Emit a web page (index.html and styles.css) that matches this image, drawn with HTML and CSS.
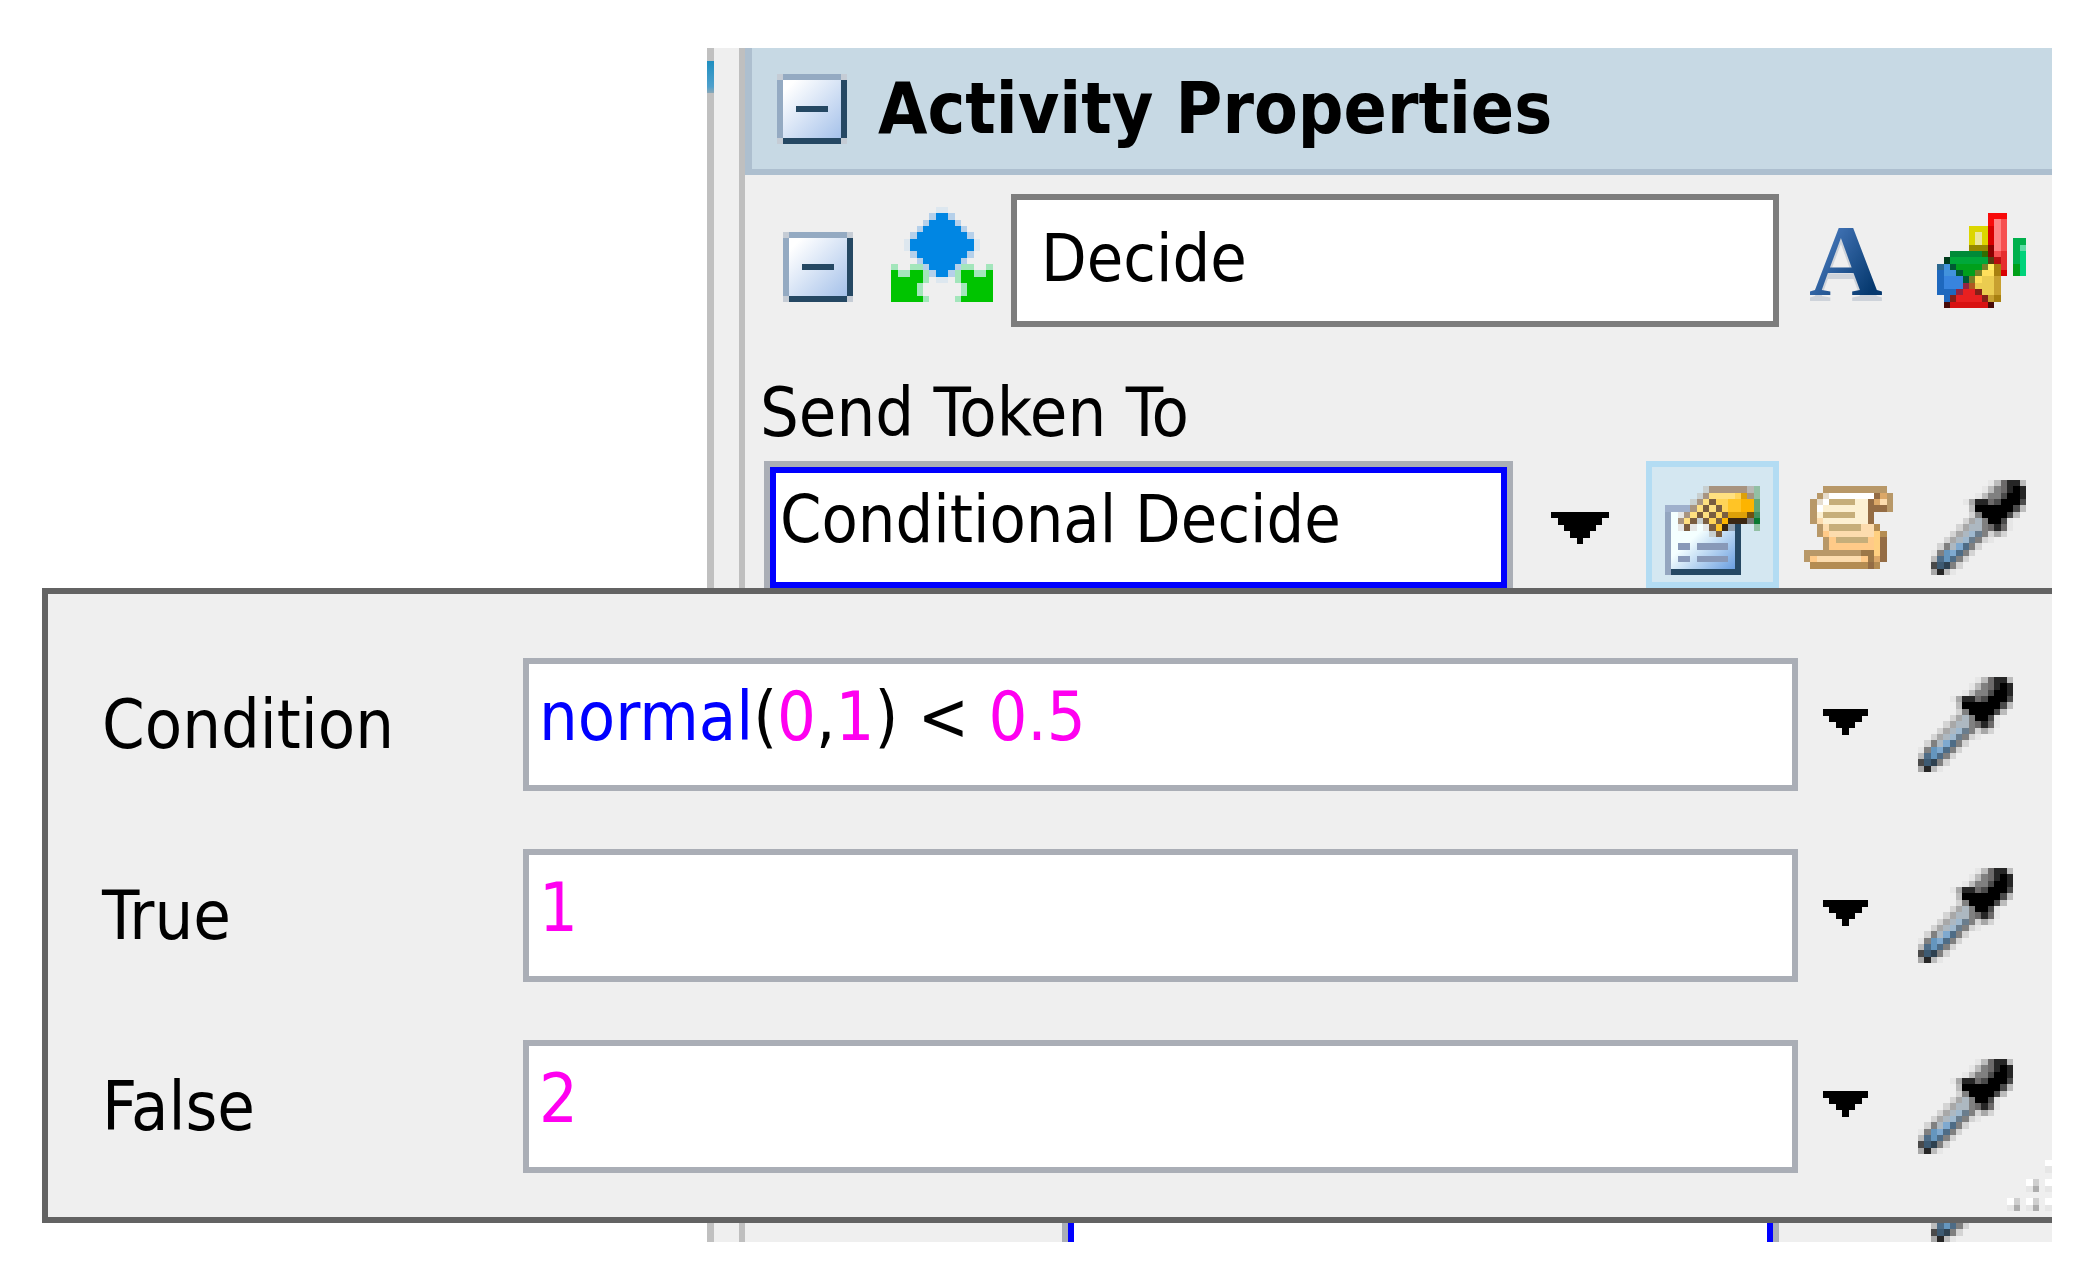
FILE: index.html
```
<!DOCTYPE html>
<html lang="en">
<head>
    <meta charset="UTF-8">
    <meta name="viewport" content="width=device-width, initial-scale=1.0">
    <title>Activity Properties</title>
    <link rel="stylesheet" href="styles.css">
</head>
<body>
    <!-- Shared icons -->
    <svg class="icon-defs" aria-hidden="true">
        <linearGradient id="boxFill" x1="0" y1="0" x2="1" y2="1">
            <stop offset="0.1" stop-color="#ffffff"/>
            <stop offset="1" stop-color="#a6c2ea"/>
        </linearGradient>
        <linearGradient id="paperFill" x1="0" y1="0" x2="1" y2="1">
            <stop offset="0.4" stop-color="#f4ffff"/>
            <stop offset="1" stop-color="#6b9fe0"/>
        </linearGradient>
        <linearGradient id="letterFill" x1="0" y1="0" x2="1" y2="1">
            <stop offset="0.2" stop-color="#4a7cc0"/>
            <stop offset="0.8" stop-color="#06396f"/>
        </linearGradient>
        <symbol id="collapse" viewBox="0 0 11 11">
            <path fill="#c5ccd5" d="M0 0h11v11h-11z"/>
            <path fill="#94aac2" d="M1 0h9v1h-9zM0 1h1v9h-1z"/>
            <path fill="#254863" d="M10 1h1v9h-1zM1 10h9v1h-9z"/>
            <path fill="url(#boxFill)" d="M1 1h9v9h-9z"/>
            <path fill="#254863" d="M3 5h5v1h-5z"/>
        </symbol>
        <symbol id="arrow" viewBox="0 0 7 4">
            <path d="M0 0h7v1h-1v1h-1v1h-1v1h-1v-1h-1v-1h-1v-1h-1z"/>
        </symbol>
        <symbol id="dropper" viewBox="0 -.5 15 15">
            <path stroke="#e6e6e6" d="M9 0h1M8 1h1M7 2h1M5 3h1M12 6h1M12 7h1M9 9h1M0 11h1M3 14h1"/>
            <path stroke="#d4d4d4" d="M6 5h1M5 6h1M4 7h1M3 8h1M9 8h1M11 8h1M2 9h1M8 9h1M1 10h1M7 10h1M6 11h1M5 12h1M4 13h1"/>
            <path stroke="#bcbcbc" d="M10 0h1M14 0h1M9 1h1M8 2h1M6 4h1M14 4h1M13 5h1M0 12h1M2 14h1"/>
            <path stroke="#a8a8a8" d="M6 3h1M6 6h1M5 7h1M4 8h1M10 8h1M3 9h1M0 14h1"/>
            <path stroke="#808080" d="M10 1h1M9 2h2M7 5h1M8 6h1M8 7h1M8 8h1M7 9h1M2 10h1M6 10h1M1 11h1M5 11h1M4 12h1M3 13h1"/>
            <path stroke="#6c6a6a" d="M11 0h1M11 1h1M9 3h1M9 7h1M11 7h1"/>
            <path stroke="#4a4a4a" d="M11 2h1M10 3h1M14 3h1M13 4h1M12 5h1M11 6h1M0 13h1"/>
            <path stroke="#262626" d="M12 0h2M12 1h1M14 1h1M14 2h1M7 3h2M10 7h1M1 14h1"/>
            <path stroke="#000" d="M13 1h1M12 2h2M11 3h3M7 4h6M8 5h4M9 6h2"/>
            <path stroke="#adb8c1" d="M7 6h1M6 7h2M5 8h1M4 9h1M3 10h1"/>
            <path stroke="#9fb9cf" d="M6 8h1M5 9h1"/>
            <path stroke="#7fa9cf" d="M4 10h1M3 11h1"/>
            <path stroke="#6596be" d="M2 11h1M2 12h1"/>
            <path stroke="#6a7d8d" d="M7 8h1M6 9h1"/>
            <path stroke="#4e6c86" d="M5 10h1M4 11h1M1 12h1M3 12h1"/>
            <path stroke="#3d5a72" d="M1 13h1"/>
            <path stroke="#2e4150" d="M2 13h1"/>
        </symbol>
    </svg>

    <main class="stage">
        <section class="inspector">
            <div class="rail"><span class="rail-mark"></span></div>
            <div class="pane">
                <header class="pane-header">
                    <button class="icon-btn" aria-label="Collapse activity properties"><svg class="icon-collapse"><use href="#collapse"/></svg></button>
                    <h1>Activity Properties</h1>
                </header>

                <div class="row name-row">
                    <button class="icon-btn toggle" aria-label="Collapse activity"><svg class="icon-collapse"><use href="#collapse"/></svg></button>
                    <svg class="icon-decide" viewBox="0 -.5 16 15" aria-hidden="true">
                        <path stroke="#dde7ef" d="M7 0h2M2 5h1M13 5h1M2 6h1M13 6h1M7 11h2"/>
                        <path stroke="#b5d0ea" d="M6 1h4M5 2h6M4 3h8M3 4h10M3 7h10M4 8h8M5 9h6M6 10h4"/>
                        <path stroke="#0086e3" d="M7 1h2M6 2h4M5 3h6M4 4h8M3 5h10M3 6h10M4 7h8M5 8h6M6 9h4M7 10h2"/>
                        <path stroke="#a3e6bb" d="M0 9h1M3 9h2M11 9h2M15 9h1M1 10h2M5 10h1M10 10h1M13 10h2M5 11h1M10 11h1M4 12h1M11 12h1M4 13h1M11 13h1M5 14h1M10 14h1"/>
                        <path stroke="#00c400" d="M0 10h1M3 10h2M11 10h2M15 10h1M0 11h5M11 11h5M0 12h4M12 12h4M0 13h4M12 13h4M0 14h5M11 14h5"/>
                    </svg>
                    <input class="name-input" type="text" aria-label="Activity name" value="Decide">
                    <div class="tools">
                        <button class="icon-btn" aria-label="Font">
                            <svg class="icon-letter" viewBox="0 0 83 77"><text class="letter" x="5" y="70">A</text></svg>
                        </button>
                        <button class="icon-btn stats" aria-label="Statistics">
                            <svg class="icon-chart" viewBox="0 -.5 14 15">
                                <path stroke="#dcd600" d="M5 2h3M5 3h3M5 4h3"/>
                                <path stroke="#ebe69c" d="M6 3h1M6 4h1"/>
                                <path stroke="#968800" d="M5 5h3"/>
                                <path stroke="#f80a0a" d="M8 0h3M8 1h1"/>
                                <path stroke="#d80000" d="M8 2h1M8 3h1M8 4h1M10 9h1"/>
                                <path stroke="#8c0000" d="M8 5h1M8 6h1"/>
                                <path stroke="#ff8484" d="M9 1h1M9 2h1M9 3h1M9 4h1M9 5h1"/>
                                <path stroke="#f65050" d="M10 1h1M10 2h1M10 3h1M10 4h1M10 5h1M9 6h1"/>
                                <path stroke="#e62e2e" d="M10 6h1M10 7h1M10 8h1"/>
                                <path stroke="#b81010" d="M9 7h1"/>
                                <path stroke="#00b04c" d="M12 4h2M12 5h1M12 6h1M12 7h1"/>
                                <path stroke="#5cdca4" d="M13 5h1"/>
                                <path stroke="#00d27a" d="M13 6h1M13 7h1M13 8h1M13 9h1"/>
                                <path stroke="#00a018" d="M12 8h1M12 9h1"/>
                                <path stroke="#008a38" d="M2 6h5"/>
                                <path stroke="#2f6e00" d="M7 6h1"/>
                                <path stroke="#003c1c" d="M1 7h1"/>
                                <path stroke="#00a83a" d="M2 7h6"/>
                                <path stroke="#00a01c" d="M3 8h4M4 9h2"/>
                                <path stroke="#005a34" d="M2 8h1M3 9h1M4 10h1"/>
                                <path stroke="#788028" d="M7 8h1M6 9h1M5 10h1"/>
                                <path stroke="#583c10" d="M8 7h1"/>
                                <path stroke="#2c6890" d="M0 8h1"/>
                                <path stroke="#4292dc" d="M1 8h1M1 9h2"/>
                                <path stroke="#3884de" d="M1 10h3M1 11h3"/>
                                <path stroke="#1e68be" d="M0 9h1M0 10h1M0 11h1M0 12h1M1 12h2M1 13h1"/>
                                <path stroke="#fff062" d="M8 8h1"/>
                                <path stroke="#ffdf5c" d="M7 9h2M6 10h1"/>
                                <path stroke="#ebcc50" d="M7 10h2M6 11h3M7 12h2"/>
                                <path stroke="#c8a030" d="M9 10h1M9 11h1M9 12h1M8 13h1"/>
                                <path stroke="#a88010" d="M9 8h1M9 9h1M9 13h1"/>
                                <path stroke="#942440" d="M4 11h1M3 12h1"/>
                                <path stroke="#b05820" d="M5 11h1"/>
                                <path stroke="#e82020" d="M4 12h2M3 13h4"/>
                                <path stroke="#842018" d="M6 12h1M2 13h1M7 13h1"/>
                                <path stroke="#d81212" d="M2 14h6"/>
                                <path stroke="#480a08" d="M1 14h1M8 14h1"/>
                            </svg>
                        </button>
                    </div>
                </div>

                <label class="field-label" for="sendTo">Send Token To</label>
                <div class="row combo-row">
                    <input class="combo" id="sendTo" type="text" value="Conditional Decide">
                    <button class="icon-btn open-list" aria-label="Show choices">
                        <svg class="icon-arrow-large" viewBox="0 0 9 5"><path d="M0 0h9v1h-1v1h-1v1h-1v1h-1v1h-1v-1h-1v-1h-1v-1h-1v-1h-1z"/></svg>
                    </button>
                    <button class="props-btn" aria-label="Edit properties">
                        <svg class="icon-props" viewBox="0 -.5 15 14">
                            <path stroke="#9fb0cc" d="M0 3h12"/>
                            <path fill="#94a6c0" d="M0 3.5h1v10h-1z"/>
                            <path fill="url(#paperFill)" d="M1 3.5h10v9h-10z"/>
                            <path fill="#254863" d="M11 5.5h1v8h-11v-1h10z"/>
                            <path stroke="#8899b8" d="M2 9h2M5 9h5M2 11h2M5 11h5"/>
                            <path stroke="#c8cfcf" d="M6 0h1M5 1h1M4 2h1M5 5h1M7 7h1"/>
                            <path stroke="#e6e7e6" d="M2 4h1M2 6h1M4 6h1M6 6h1"/>
                            <path stroke="#a89480" d="M7 0h6M6 1h1M13 1h1M5 2h1M4 3h1M3 4h1M2 5h1"/>
                            <path stroke="#b8b8b4" d="M13 0h1"/>
                            <path stroke="#ffe080" d="M7 1h4M6 2h1M5 3h1M7 3h1M4 4h1M6 4h1M3 5h1"/>
                            <path stroke="#ffd458" d="M11 1h1M8 2h2M8 4h1M9 3h1M7 5h1"/>
                            <path stroke="#ffc426" d="M10 2h2M10 3h2M8 6h1"/>
                            <path stroke="#fdb400" d="M12 2h2M12 3h2M9 5h1"/>
                            <path stroke="#dda008" d="M12 1h1M10 4h3"/>
                            <path stroke="#7a5d40" d="M7 2h1M6 3h1M8 3h1M5 4h1M7 4h1M9 4h1M4 5h1M6 5h1M8 5h1M3 6h1M7 6h1M8 7h1"/>
                            <path stroke="#705010" d="M13 4h1"/>
                            <path stroke="#3a2612" d="M10 5h3M9 6h1"/>
                            <path stroke="#787878" d="M13 5h1"/>
                            <path stroke="#90a0b0" d="M10 6h1"/>
                            <path stroke="#92c0a4" d="M14 0h1M14 1h1M14 6h1"/>
                            <path stroke="#64a674" d="M14 2h1M14 3h1"/>
                            <path stroke="#409060" d="M14 4h1"/>
                            <path stroke="#087830" d="M14 5h1"/>
                        </svg>
                    </button>
                    <div class="tools">
                        <button class="icon-btn" aria-label="Script">
                            <svg class="icon-scroll" viewBox="0 -.5 14 13">
                                <path stroke="#b89868" d="M3 0h10M2 1h1M13 1h1M1 2h1M13 2h1M1 3h1M13 3h1M1 4h1M1 5h1M2 6h1M2 7h1M3 8h1M3 9h1M0 10h9M0 11h1"/>
                                <path stroke="#fff" d="M4 1h7M3 2h1M2 3h1"/>
                                <path stroke="#e6dccc" d="M3 1h1M2 2h1"/>
                                <path stroke="#fcf0d2" d="M8 2h2M3 3h7M2 4h1M8 4h2M3 5h7"/>
                                <path stroke="#fcdcae" d="M2 5h1M3 6h1M9 6h2M4 7h7M2 11h7M12 2h1"/>
                                <path stroke="#ffca88" d="M3 7h1M4 8h1M10 8h1M4 9h7M1 11h1M9 11h1"/>
                                <path stroke="#ffd080" d="M11 7h1M11 8h1M11 9h1M11 10h1"/>
                                <path stroke="#c6ae7a" d="M4 2h4M3 4h5M4 6h5M5 8h5"/>
                                <path stroke="#946c44" d="M11 1h1M10 2h1M10 3h3M10 4h1M10 5h1M12 8h1M12 9h1M12 10h1M12 11h1M10 12h1"/>
                                <path stroke="#dca868" d="M12 1h1M11 2h1M11 11h1"/>
                                <path stroke="#b48c52" d="M11 6h1M12 7h1M1 12h9M11 12h1"/>
                                <path stroke="#9c7848" d="M9 10h2M10 11h1"/>
                            </svg>
                        </button>
                        <button class="icon-btn" aria-label="Pick from model"><svg class="icon-dropper"><use href="#dropper"/></svg></button>
                    </div>
                </div>

                <div class="row next-row">
                    <input class="combo" type="text" aria-label="Next property">
                    <div class="tools">
                        <span></span>
                        <button class="icon-btn" aria-label="Pick from model"><svg class="icon-dropper"><use href="#dropper"/></svg></button>
                    </div>
                </div>
            </div>
        </section>

        <!-- Conditional decide popup -->
        <form class="popup">
            <label for="condition">Condition</label>
            <div class="code-field">
                <input class="code-input highlighted" id="condition" type="text" value="normal(0,1) &lt; 0.5" spellcheck="false">
                <div class="code-colors" aria-hidden="true"><span class="fn">normal</span>(<span class="num">0</span>,<span class="num">1</span>) &lt; <span class="num">0.5</span></div>
            </div>
            <button type="button" class="icon-btn choices" aria-label="Condition choices"><svg class="icon-arrow"><use href="#arrow"/></svg></button>
            <button type="button" class="icon-btn" aria-label="Pick condition"><svg class="icon-dropper"><use href="#dropper"/></svg></button>

            <label for="whenTrue">True</label>
            <input class="code-input" id="whenTrue" type="text" value="1">
            <button type="button" class="icon-btn choices" aria-label="True choices"><svg class="icon-arrow"><use href="#arrow"/></svg></button>
            <button type="button" class="icon-btn" aria-label="Pick true value"><svg class="icon-dropper"><use href="#dropper"/></svg></button>

            <label for="whenFalse">False</label>
            <input class="code-input" id="whenFalse" type="text" value="2">
            <button type="button" class="icon-btn choices" aria-label="False choices"><svg class="icon-arrow"><use href="#arrow"/></svg></button>
            <button type="button" class="icon-btn" aria-label="Pick false value"><svg class="icon-dropper"><use href="#dropper"/></svg></button>

            <svg class="grip" viewBox="0 -.5 7 8" aria-hidden="true">
                <path stroke="#fff" d="M6 0h1M3 3h1M6 3h1M0 6h1M3 6h1M6 6h1"/>
                <path stroke="#e6e6e6" d="M6 1h1M3 4h1M6 4h1M0 7h1M3 7h1M6 7h1"/>
                <path stroke="#cfcfcf" d="M4 3h1M1 6h1M4 6h1"/>
                <path stroke="#adadad" d="M4 4h1M1 7h1M4 7h1"/>
            </svg>
        </form>
    </main>
</body>
</html>
```
FILE: styles.css
```
* {
    margin: 0;
    padding: 0;
    box-sizing: border-box;
}

body {
    height: 100vh;
    padding: 48px 43px 43px 42px;
    background: white;
    color: black;
    font-family: "DejaVu Sans Condensed", "DejaVu Sans", Tahoma, sans-serif;
    font-size: 68px;
    line-height: 80px;
}

input, button {
    font: inherit;
    color: inherit;
}

svg {
    display: block;
    shape-rendering: crispEdges;
}

.icon-defs {
    position: absolute;
    width: 0;
    height: 0;
}

.stage {
    position: relative;
    height: 100%;
}

/* Inspector */
.inspector {
    display: flex;
    height: 100%;
    margin-left: 665px;
    background: #efefef;
    overflow: hidden;
}

.rail {
    width: 38px;
    padding-top: 13px;
    border-left: 7px solid #c0c0c0;
    border-right: 6px solid #bfbfbf;
}

.rail-mark {
    display: block;
    width: 7px;
    height: 32px;
    margin-left: -7px;
    background: linear-gradient(#1f8fc0, #4fa0cc 80%, #8aa8b8);
}

.pane {
    flex: 1;
    min-width: 0;
    display: flex;
    flex-direction: column;
}

.pane-header {
    display: flex;
    align-items: center;
    gap: 31px;
    height: 127px;
    padding-left: 25px;
    background: #c7d9e4;
    border-left: 7px solid #adbfcf;
    border-bottom: 6px solid #adbfcf;
}

h1 {
    font-size: 71px;
    font-weight: bold;
    white-space: nowrap;
}

.row {
    display: flex;
    padding-right: 26px;
}

.tools {
    display: grid;
    grid-template-columns: 89px 95px;
    gap: 38px;
    align-items: center;
    margin-left: 25px;
}

.icon-btn {
    display: flex;
    background: none;
    border: none;
    cursor: pointer;
}

.name-row {
    align-items: flex-end;
    padding-top: 19px;
    padding-left: 38px;
}

.name-row .toggle {
    margin: 0 38px 25px 0;
}

.name-row .icon-decide {
    margin: 0 18px 25px 0;
}

.name-row .tools {
    align-items: end;
    padding-bottom: 19px;
}

.name-row .icon-letter {
    margin-bottom: 6px;
}

.stats {
    justify-content: flex-end;
}

.name-input, .combo {
    flex: 1;
    min-width: 0;
    height: 133px;
    background: white;
    font-size: 66px;
}

.name-input {
    padding: 0 24px 4px;
    border: 6px solid #7d7d7d;
}

.field-label {
    margin: 46px 0 8px 15px;
}

.combo-row {
    padding-left: 19px;
}

.combo {
    padding: 0 10px 16px;
    border: 6px solid #aaaeb6;
    box-shadow: inset 0 0 0 6px #0000ff;
    outline: none;
}

.open-list {
    width: 133px;
    align-items: center;
    justify-content: center;
}

.props-btn {
    width: 133px;
    height: 127px;
    padding: 19px 13px 7px;
    background: #d4e7f1;
    border: 6px solid #b3dcf3;
    cursor: pointer;
}

.next-row {
    align-items: flex-end;
    margin-top: auto;
    padding-left: 317px;
}

.next-row .combo {
    border-bottom: none;
    box-shadow: inset 6px 0 #0000ff, inset -6px 0 #0000ff;
}

/* Popup */
.popup {
    position: absolute;
    top: 540px;
    left: 0;
    right: 0;
    display: grid;
    grid-template-columns: 421px 1fr 120px 96px;
    row-gap: 58px;
    align-items: center;
    padding: 64px 38px 44px 54px;
    background: #efefef;
    border: 6px solid #636363;
    border-right: none;
}

.choices {
    padding: 0 50px 6px 25px;
}

.code-field {
    display: grid;
}

.code-input, .code-colors {
    width: 100%;
    min-width: 0;
    height: 133px;
    padding: 0 10px 16px;
    border: 6px solid #aaaeb6;
}

.code-input {
    background: white;
    color: #ff00f0;
}

.code-input.highlighted {
    grid-area: 1 / 1;
    color: transparent;
    caret-color: black;
}

.code-colors {
    grid-area: 1 / 1;
    display: flex;
    align-items: center;
    white-space: pre;
    border-color: transparent;
    pointer-events: none;
}

.fn {
    color: #0000ff;
}

.num {
    color: #ff00f0;
}

.grip {
    position: absolute;
    right: 0;
    bottom: 6px;
    width: 45px;
    height: 51px;
}

/* Icon sizes */
.icon-collapse {
    width: 70px;
    height: 70px;
}

.icon-decide {
    width: 102px;
    height: 95px;
}

.icon-letter {
    width: 83px;
    height: 77px;
    overflow: visible;
    filter: drop-shadow(0 6px 0 #ced3da);
}

.letter {
    font-family: "Liberation Serif", serif;
    font-size: 102px;
    font-weight: bold;
    fill: url(#letterFill);
}

.icon-chart {
    width: 89px;
    height: 95px;
}

.icon-arrow {
    width: 45px;
    height: 26px;
}

.icon-arrow-large {
    width: 58px;
    height: 32px;
}

.icon-props {
    width: 95px;
    height: 89px;
}

.icon-scroll {
    width: 89px;
    height: 83px;
}

.icon-dropper {
    width: 95px;
    height: 95px;
}
```
